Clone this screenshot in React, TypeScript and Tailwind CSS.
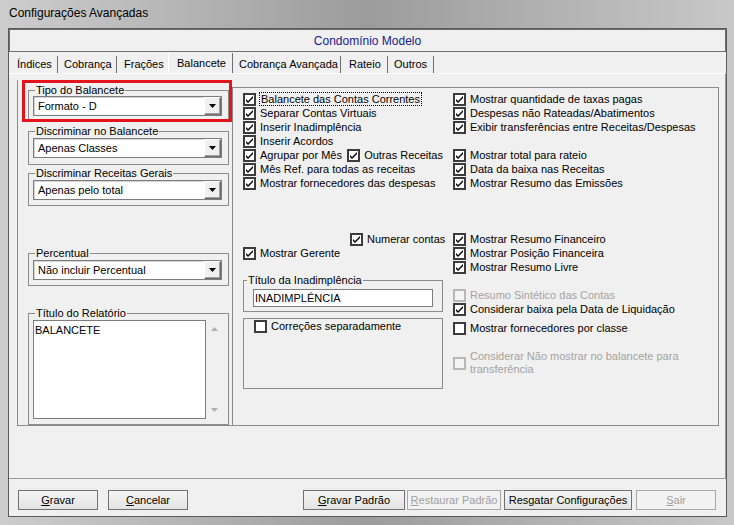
import React from "react";

function Check({ checked, disabled }: { checked?: boolean; disabled?: boolean }) {
  return (
    <span
      className={
        disabled
          ? "inline-flex w-[13px] h-[13px] shrink-0 items-center justify-center border-2 border-[#b8b8b8] bg-[#f4f4f4]"
          : "inline-flex w-[13px] h-[13px] shrink-0 items-center justify-center border-2 border-[#3c3c3c] bg-white"
      }
    >
      {checked && (
        <svg width="9" height="9" viewBox="0 0 9 9">
          <polygon points="1,4 3,6 8,1 8,3 3,8 1,6" fill="#000" />
        </svg>
      )}
    </span>
  );
}

function CB({
  label,
  checked,
  disabled,
  focus,
}: {
  label: React.ReactNode;
  checked?: boolean;
  disabled?: boolean;
  focus?: boolean;
}) {
  return (
    <div className="flex items-center h-[14px]">
      <Check checked={checked} disabled={disabled} />
      {focus ? (
        <span className="ml-[3px] px-[1px] border border-dotted border-black leading-[12px] whitespace-nowrap">
          {label}
        </span>
      ) : (
        <span
          className={
            disabled
              ? "ml-[4px] leading-[14px] whitespace-nowrap text-[#a3a3a3]"
              : "ml-[4px] leading-[14px] whitespace-nowrap text-black"
          }
        >
          {label}
        </span>
      )}
    </div>
  );
}

function Combo({ value }: { value: string }) {
  return (
    <div className="ml-[4px] w-[189px] h-[20px] flex items-center bg-white border border-[#7d7d7d] shadow-[inset_1px_1px_0_#d4d4d4]">
      <span className="pl-[4px] flex-1 leading-[14px] whitespace-nowrap">{value}</span>
      <div className="mr-[0px] w-[17px] h-[18px] flex items-center justify-center bg-[#f0f0f0] border-t border-l border-t-white border-l-white border-r border-b border-r-[#6e6e6e] border-b-[#6e6e6e] shadow-[inset_-1px_-1px_0_#a0a0a0]">
        <svg width="7" height="4" viewBox="0 0 7 4">
          <polygon points="0,0 7,0 3.5,4" fill="#000" />
        </svg>
      </div>
    </div>
  );
}

function Legend({ children }: { children: React.ReactNode }) {
  return (
    <legend className="ml-[6px] px-[1px] leading-[12px] whitespace-nowrap">{children}</legend>
  );
}

export default function App() {
  return (
    <div className="relative w-[734px] h-[525px] overflow-hidden flex flex-col bg-linear-to-r from-[#cdcdcd] via-[#9c9c9c] to-[#c8c8c8] font-['Liberation_Sans',Arial,sans-serif] text-[11px] text-black">
      {/* title bar */}
      <div className="h-[28px] shrink-0 flex items-center pl-[9px] pb-[2px] text-[12px] text-black">
        Configurações Avançadas
      </div>

      {/* client */}
      <div className="ml-[8px] w-[719px] h-[489px] shrink-0 border border-[#5a5a5a] bg-[#f0f0f0] flex flex-col">
        {/* header */}
        <div className="h-[23px] shrink-0 border border-[#6e6e6e] flex items-center justify-center text-[12px] text-[#1b1b8f]">
          Condomínio Modelo
        </div>

        {/* tabs */}
        <div className="h-[21px] shrink-0 flex items-end pl-[5px]">
          <div className="w-[44px] h-[17px] border-r border-[#6f6f6f] pl-[3px] leading-[16px]">Índices</div>
          <div className="w-[59px] h-[17px] border-r border-[#6f6f6f] pl-[6px] leading-[16px]">Cobrança</div>
          <div className="w-[51px] h-[17px] pl-[7px] leading-[16px]">Frações</div>
          <div className="w-[65px] h-[20px] border-l border-l-white border-r border-r-[#6f6f6f] pl-[8px] pt-[2px] leading-[16px]">
            Balancete
          </div>
          <div className="w-[108px] h-[17px] border-r border-[#6f6f6f] pl-[6px] leading-[16px]">Cobrança Avançada</div>
          <div className="w-[47px] h-[17px] border-r border-[#6f6f6f] pl-[8px] leading-[16px]">Rateio</div>
          <div className="w-[46px] h-[17px] border-r border-[#6f6f6f] pl-[6px] leading-[16px]">Outros</div>
        </div>

        {/* tab page */}
        <div className="h-[406px] shrink-0 border-t border-t-white border-b border-b-[#9a9a9a] border-r border-r-[#9a9a9a] pt-[6px] pl-[8px] flex items-start">
          {/* left column */}
          <div className="w-[215px] h-[346px] shrink-0 border-l border-b border-[#8c8c8c] pl-[10px] pt-[4px] flex flex-col">
            <fieldset className="w-[201px] border border-[#8c8c8c] pb-[3px]">
              <Legend>Tipo do Balancete</Legend>
              <Combo value="Formato - D" />
            </fieldset>
            <fieldset className="mt-[5px] w-[201px] border border-[#8c8c8c] pb-[6px]">
              <Legend>Discriminar no Balancete</Legend>
              <div className="mt-[1px]">
                <Combo value="Apenas Classes" />
              </div>
            </fieldset>
            <fieldset className="mt-[2px] w-[201px] border border-[#8c8c8c] pb-[5px]">
              <Legend>Discriminar Receitas Gerais</Legend>
              <div className="mt-[1px]">
                <Combo value="Apenas pelo total" />
              </div>
            </fieldset>
            <fieldset className="mt-[41px] w-[201px] border border-[#8c8c8c] pb-[5px]">
              <Legend>Percentual</Legend>
              <div className="mt-[1px]">
                <Combo value="Não incluir Percentual" />
              </div>
            </fieldset>
            <fieldset className="mt-[21px] w-[201px] border border-[#8c8c8c] pb-[5px]">
              <Legend>Título do Relatório</Legend>
              <div className="mt-[1px] ml-[4px] flex">
                <div className="w-[173px] h-[99px] bg-white border border-[#7d7d7d] pl-[1px] pt-[2px] leading-[14px]">
                  BALANCETE
                </div>
                <div className="w-[16px] h-[99px] flex flex-col items-center justify-between pt-[7px] pb-[7px]">
                  <svg width="7" height="4" viewBox="0 0 7 4">
                    <polygon points="0,4 7,4 3.5,0" fill="#b0b0b0" />
                  </svg>
                  <svg width="7" height="4" viewBox="0 0 7 4">
                    <polygon points="0,0 7,0 3.5,4" fill="#b0b0b0" />
                  </svg>
                </div>
              </div>
            </fieldset>
          </div>

          {/* middle panel */}
          <div className="mt-[7px] w-[487px] h-[339px] shrink-0 border border-[#8c8c8c] pl-[10px] pt-[4px] flex">
            {/* middle column */}
            <div className="w-[200px] shrink-0 flex flex-col">
              <CB label="Balancete das Contas Correntes" checked focus />
              <CB label="Separar Contas Virtuais" checked />
              <CB label="Inserir Inadimplência" checked />
              <CB label="Inserir Acordos" checked />
              <div className="flex">
                <div className="w-[107px]">
                  <CB label="Agrupar por Mês" checked />
                </div>
                <CB label="Outras Receitas" checked />
              </div>
              <CB label="Mês Ref. para todas as receitas" checked />
              <CB label="Mostrar fornecedores das despesas" checked />
              <div className="mt-[42px] pl-[107px]">
                <CB label="Numerar contas" checked />
              </div>
              <CB label="Mostrar Gerente" checked />
              <fieldset className="mt-[14px] w-[200px] border border-[#8c8c8c] pb-[4px]">
                <legend className="ml-[3px] px-[1px] leading-[12px] whitespace-nowrap">Título da Inadimplência</legend>
                <div className="mt-[3px] ml-[9px] w-[180px] h-[18px] bg-white border border-[#7d7d7d] pl-[1px] leading-[16px]">
                  INADIMPLÊNCIA
                </div>
              </fieldset>
              <div className="mt-[6px] w-[200px] h-[71px] border border-[#8c8c8c] pl-[10px]">
                <CB label="Correções separadamente" />
              </div>
            </div>

            {/* right column */}
            <div className="ml-[10px] flex flex-col">
              <CB label="Mostrar quantidade de taxas pagas" checked />
              <CB label="Despesas não Rateadas/Abatimentos" checked />
              <CB label="Exibir transferências entre Receitas/Despesas" checked />
              <div className="mt-[14px]">
                <CB label="Mostrar total para rateio" checked />
              </div>
              <CB label="Data da baixa nas Receitas" checked />
              <CB label="Mostrar Resumo das Emissões" checked />
              <div className="mt-[42px]">
                <CB label="Mostrar Resumo Financeiro" checked />
              </div>
              <CB label="Mostrar Posição Financeira" checked />
              <CB label="Mostrar Resumo Livre" checked />
              <div className="mt-[14px]">
                <CB label="Resumo Sintético das Contas" disabled />
              </div>
              <CB label="Considerar baixa pela Data de Liquidação" checked />
              <div className="mt-[5px]">
                <CB label="Mostrar fornecedores por classe" />
              </div>
              <div className="mt-[15px] flex items-center">
                <Check disabled />
                <span className="ml-[4px] leading-[13px] text-[#a3a3a3]">
                  Considerar Não mostrar no balancete para
                  <br />
                  transferência
                </span>
              </div>
            </div>
          </div>
        </div>

        {/* buttons */}
        <div className="mt-[11px] h-[20px] flex pl-[9px]">
          <button className="w-[80px] h-[20px] border border-[#707070] bg-linear-to-b from-[#f4f4f4] to-[#e4e4e4] leading-[14px]">
            <span className="underline">G</span>ravar
          </button>
          <button className="ml-[10px] w-[80px] h-[20px] border border-[#707070] bg-linear-to-b from-[#f4f4f4] to-[#e4e4e4] leading-[14px]">
            <span className="underline">C</span>ancelar
          </button>
          <button className="ml-[115px] w-[102px] h-[20px] border border-[#707070] bg-linear-to-b from-[#f4f4f4] to-[#e4e4e4] leading-[14px]">
            <span className="underline">G</span>ravar Padrão
          </button>
          <button className="ml-[2px] w-[94px] h-[20px] border border-[#a8a8a8] bg-[#f2f2f2] text-[#a0a0a0] leading-[14px]">
            <span className="underline">R</span>estaurar Padrão
          </button>
          <button className="ml-[3px] w-[128px] h-[20px] border border-[#707070] bg-linear-to-b from-[#f4f4f4] to-[#e4e4e4] leading-[14px]">
            Resgatar Configurações
          </button>
          <button className="ml-[4px] w-[80px] h-[20px] border border-[#a8a8a8] bg-[#f2f2f2] text-[#a0a0a0] leading-[14px]">
            <span className="underline">S</span>air
          </button>
        </div>
      </div>

      {/* red highlight annotation */}
      <div className="absolute left-[22px] top-[80px] w-[210px] h-[42px] border-[3px] border-[#e3141b]" />
    </div>
  );
}
